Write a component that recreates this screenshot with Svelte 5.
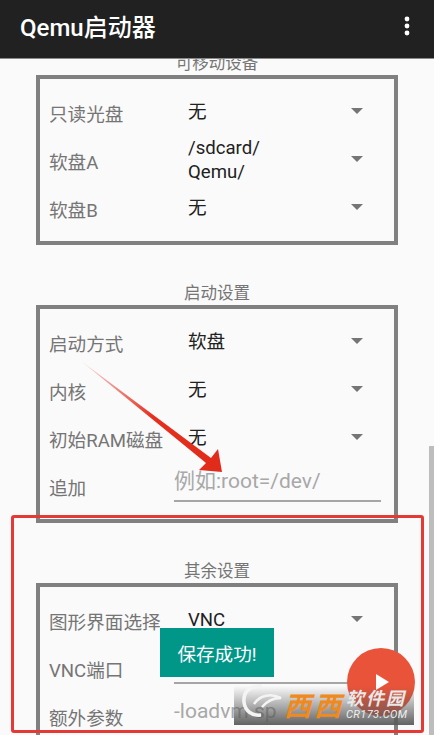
<script>
  const sections = [
    { title: '可移动设备', rows: [
      { label: '只读光盘', value: '无' },
      { label: '软盘A', value: '/sdcard/ Qemu/' },
      { label: '软盘B', value: '无' }
    ]},
    { title: '启动设置', rows: [
      { label: '启动方式', value: '软盘' },
      { label: '内核', value: '无' },
      { label: '初始RAM磁盘', value: '无' },
      { label: '追加', placeholder: '例如:root=/dev/' }
    ]},
    { title: '其余设置', rows: [
      { label: '图形界面选择', value: 'VNC' },
      { label: 'VNC端口', placeholder: '' },
      { label: '额外参数', placeholder: '-loadvm sp' }
    ]}
  ];
</script>

<div class="screen">
  <header class="bar">
    <h1>Qemu启动器</h1>
    <svg class="more" width="6" height="20" viewBox="0 0 6 20"><circle cx="3" cy="3" r="2.4"/><circle cx="3" cy="10" r="2.4"/><circle cx="3" cy="17" r="2.4"/></svg>
  </header>

  <main class="content">
    {#each sections as s}
      <section>
        <h2>{s.title}</h2>
        <div class="box">
          {#each s.rows as r}
            <div class="row">
              <span class="label">{r.label}</span>
              {#if r.placeholder !== undefined}
                <span class="input">{r.placeholder}</span>
              {:else}
                <span class="value">{r.value}</span>
                <span class="caret"></span>
              {/if}
            </div>
          {/each}
        </div>
      </section>
    {/each}
  </main>

  <div class="scrollbar"></div>
  <svg class="arrow" width="434" height="735" viewBox="0 0 434 735">
    <defs>
      <linearGradient id="g" x1="82" y1="362" x2="222" y2="472" gradientUnits="userSpaceOnUse">
        <stop offset="0" stop-color="#e53020" stop-opacity="0.15"/>
        <stop offset="0.5" stop-color="#e53020"/>
        <stop offset="1" stop-color="#e02a1a"/>
      </linearGradient>
    </defs>
    <polygon points="81,361 211,458 218,449 222,472 199,470 206,463" fill="url(#g)"/>
  </svg>
  <div class="toast">保存成功!</div>
  <div class="fab"><span class="play"></span></div>
  <div class="mark">
    <svg class="logo" width="46" height="38" viewBox="0 0 46 38"><path d="M24 4C12 3 5 10 6 20c1 9 8 14 17 13" fill="none" stroke="#f4f4f4" stroke-width="3.5"/><path d="M16 22c6-9 17-11 27-6-8 0-14 3-19 9" fill="none" stroke="#f4f4f4" stroke-width="2.5"/></svg>
    <span class="xi">西西</span>
    <span class="soft"><b>软件园</b><i>CR173.COM</i></span>
  </div>
  <div class="redbox"></div>
</div>

<style>
  :global(body) { margin: 0; }
  .screen {
    position: relative;
    width: 434px;
    height: 735px;
    overflow: hidden;
    background: #fafafa;
    font-family: Roboto, "Noto Sans CJK SC", sans-serif;
  }
  .bar {
    position: relative;
    z-index: 2;
    height: 59px;
    background: #212121;
    border-bottom: 1px solid #8a8a8a;
    box-sizing: border-box;
    display: flex;
    align-items: center;
    justify-content: space-between;
    padding: 0 24px 7px 20px;
  }
  h1 { margin: 0; font-size: 24px; font-weight: 500; color: #fff; }
  .more { fill: #fff; }
  .content { margin-top: -7px; display: flex; flex-direction: column; gap: 37px; }
  h2 {
    margin: 0;
    height: 23px;
    line-height: 23px;
    text-align: center;
    font-size: 16.5px;
    font-weight: 400;
    color: #757575;
  }
  .box {
    margin: 0 36px;
    border: 4px solid #808080;
    padding: 9px 9px 9px 9px;
  }
  .row { display: flex; align-items: center; height: 48px; position: relative; }
  .label { font-size: 18.6px; color: #757575; width: 139px; flex: none; white-space: nowrap; }
  .value { font-size: 18.6px; line-height: 24px; color: #212121; width: 120px; flex: none; }
  .caret {
    position: absolute;
    left: 302px;
    top: 50%;
    margin-top: -4px;
    width: 0;
    height: 0;
    border-left: 6px solid transparent;
    border-right: 6px solid transparent;
    border-top: 6px solid #757575;
  }
  .input {
    position: absolute;
    left: 125px;
    width: 207px;
    top: 2px;
    height: 36px;
    line-height: 34px;
    border-bottom: 2px solid #a6a6a6;
    font-size: 21px;
    color: #a8a8a8;
    white-space: nowrap;
    overflow: hidden;
  }
  .scrollbar { position: absolute; left: 429px; top: 446px; width: 5px; height: 289px; background: #bdbdbd; }
  .arrow { position: absolute; left: 0; top: 0; }
  .toast {
    position: absolute;
    left: 160px;
    top: 628px;
    width: 114px;
    height: 49px;
    background: #009688;
    color: #fff;
    font-size: 18.6px;
    display: flex;
    align-items: center;
    justify-content: center;
  }
  .fab {
    position: absolute;
    left: 347px;
    top: 648px;
    width: 68px;
    height: 68px;
    border-radius: 50%;
    background: #e9533a;
  }
  .play {
    position: absolute;
    left: 29px;
    top: 26px;
    border-left: 13px solid #fff;
    border-top: 8px solid transparent;
    border-bottom: 8px solid transparent;
  }
  .mark {
    position: absolute;
    left: 234px;
    top: 686px;
    width: 180px;
    height: 39px;
    background: linear-gradient(to bottom, rgba(120,120,120,0), rgba(90,90,90,0.95));
    overflow: visible;
  }
  .logo { position: absolute; left: 4px; top: -4px; }
  .xi {
    position: absolute;
    left: 50px;
    top: 6px;
    font-size: 27px;
    line-height: 30px;
    font-weight: 700;
    font-style: italic;
    letter-spacing: 3px;
    color: #f08a1e;
    white-space: nowrap;
  }
  .soft { position: absolute; left: 112px; top: 3px; display: flex; flex-direction: column; }
  .soft b { font-size: 18px; line-height: 20px; font-style: italic; letter-spacing: 2px; color: #e8e8e8; white-space: nowrap; }
  .soft i { font-size: 11px; line-height: 12px; color: #eee; white-space: nowrap; letter-spacing: 0.4px; }
  .redbox {
    position: absolute;
    left: 11px;
    top: 515px;
    width: 413px;
    height: 218px;
    box-sizing: border-box;
    border: 3px solid #e53935;
    border-radius: 3px;
  }
</style>
